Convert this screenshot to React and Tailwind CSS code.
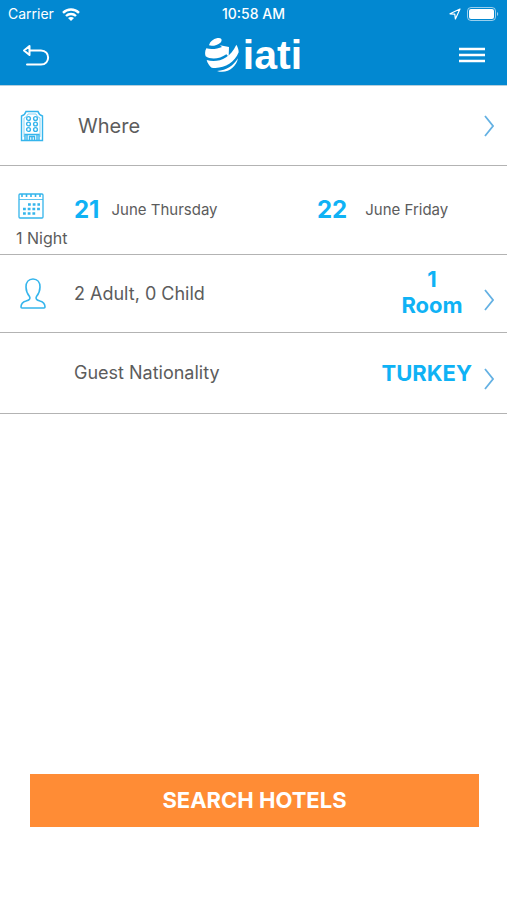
/**
 * HotelSearch: mobile hotel search form with destination, dates, guests
 * and nationality rows.
 */

function StatusBar() {
  return (
    <div className="grid h-7 grid-cols-3 items-center px-2 text-sm">
      <div className="flex items-center gap-2">
        <span>Carrier</span>
        <svg viewBox="0 0 18 13" className="h-[13px] w-[18px]" fill="none" stroke="currentColor" strokeWidth="2.4">
          <path d="M1 4.8C5.5.4 12.5.4 17 4.8" />
          <path d="M4 8C6.8 5.3 11.2 5.3 14 8" />
          <path d="M9 13 6 10.1C7.8 8.6 10.2 8.6 12 10.1Z" fill="currentColor" stroke="none" />
        </svg>
      </div>
      <span className="text-center font-medium">10:58 AM</span>
      <div className="flex items-center justify-end gap-1.5">
        <svg viewBox="0 0 12 12" className="size-3" fill="none" stroke="currentColor" strokeWidth="1.2" strokeLinejoin="round">
          <path d="M11 1 1 5.8 5.8 6.2 6.4 11Z" />
        </svg>
        <svg viewBox="0 0 32 14" className="h-3.5 w-8" fill="none">
          <rect x="0.5" y="0.5" width="28" height="13" rx="3.5" stroke="currentColor" opacity="0.6" />
          <rect x="2" y="2" width="25" height="10" rx="2" fill="currentColor" />
          <path d="M30 5v4c1.6-.6 1.6-3.4 0-4Z" fill="currentColor" opacity="0.6" />
        </svg>
      </div>
    </div>
  );
}

function Logo() {
  return (
    <div className="flex items-center gap-1">
      <svg viewBox="0 0 102 106" className="h-9 w-[34px]" fill="currentColor">
        <path d="M12 24C15 10 30 2 42 2C51 3 52 10 46 16C38 23 22 28 12 24Z" />
        <path d="M4 33C20 38 38 34 51 29L45 24L72 29L71 58L64 51C44 66 16 67 2 57C-1 48 0 40 4 33Z" />
        <path d="M5 68C36 77 74 66 94 22C99 30 101 38 101 45C88 78 54 96 20 91C13 86 7 77 5 68Z" />
        <path d="M36 101C66 99 86 84 99 63C94 90 66 111 36 101Z" />
      </svg>
      <span className="font-['Liberation_Sans',sans-serif] text-[41px] leading-10 font-bold">iati</span>
    </div>
  );
}

function BuildingIcon() {
  return (
    <svg viewBox="0 0 24 32" className="h-8 w-6" fill="none" stroke="currentColor" strokeWidth="1.4">
      <path d="M1.5 30.5V6Q5 5 6 1.5H18Q19 5 22.5 6V30.5Z" />
      <path d="M4 27V8Q7 7 8 4H16Q17 7 20 8V27" strokeWidth="0.6" />
      <circle cx="8.5" cy="8.5" r="1.9" />
      <circle cx="15.5" cy="8.5" r="1.9" />
      <circle cx="8.5" cy="14" r="1.9" />
      <circle cx="15.5" cy="14" r="1.9" />
      <circle cx="8.5" cy="19.5" r="1.9" />
      <circle cx="15.5" cy="19.5" r="1.9" />
      <path d="M5 30V24.5H19V30M7 24.5V30M17 24.5V30M9.5 30V26.5H14.5V30M12 26.5V30" />
    </svg>
  );
}

function CalendarIcon() {
  return (
    <svg viewBox="0 0 26 26" className="size-[26px]" fill="none" stroke="currentColor">
      <rect x="1" y="1" width="24" height="24" rx="1" strokeWidth="1.3" />
      <path d="M1 6.5H25" strokeWidth="0.8" />
      <path d="M4 1v3M8.5 1v3M13 1v3M17.5 1v3M22 1v3" strokeWidth="1.6" />
      <path d="M10 11.5H22M5 16H22M5 20.5H18" strokeWidth="2.6" strokeDasharray="2.8 1.9" />
    </svg>
  );
}

function GuestIcon() {
  return (
    <svg viewBox="0 0 26 31" className="h-[31px] w-[26px]" fill="none" stroke="currentColor" strokeWidth="1.6" strokeLinejoin="round">
      <path d="M13 1C8.5 1 6 4.5 6 9C6 13 7.5 16 9.5 18.5C11 21 9 22 6 23C2.5 24 1 25.500 1 29Q1 30 2 30H24Q25 30 25 29C25 25.500 23.500 24 20 23C17 22 15 21 16.500 18.500C18.500 16 20 13 20 9C20 4.500 17.500 1 13 1Z" />
    </svg>
  );
}

function Chevron() {
  return (
    <svg viewBox="0 0 10 22" className="h-[22px] w-2.5 shrink-0 text-[#64b1e3]" fill="none" stroke="currentColor" strokeWidth="1.8">
      <path d="M1 1 9 11 1 21" />
    </svg>
  );
}

export default function App() {
  return (
    <div className="flex min-h-screen flex-col bg-white font-[Inter,sans-serif] text-[#5c5c5c]">
      <header className="border-b border-[#b5cfdd] bg-[#0288d1] text-white">
        <StatusBar />
        <nav className="grid h-[57px] grid-cols-3 items-center px-[22px] pb-[3px]">
          <button type="button" aria-label="Back" className="justify-self-start">
            <svg viewBox="0 0 28 24" className="h-6 w-7" fill="none" stroke="currentColor" strokeWidth="2" strokeLinecap="round" strokeLinejoin="round">
              <path d="M8 7.5H19C28.5 7.5 28.5 21.5 19 21.5H5" />
              <path d="M7.5 3 2 7.5 7.5 12Z" />
            </svg>
          </button>
          <div className="justify-self-center">
            <Logo />
          </div>
          <button type="button" aria-label="Menu" className="justify-self-end">
            <svg viewBox="0 0 26 16" className="h-4 w-[26px]" stroke="currentColor" strokeWidth="2.4">
              <path d="M0 2H26M0 8H26M0 14H26" />
            </svg>
          </button>
        </nav>
      </header>

      <main className="flex flex-1 flex-col">
        <button type="button" className="flex h-20 items-center border-b border-[#b3b3b3] pr-[13px] pl-5 text-left">
          <span className="w-[58px] text-[#35b5ec]"><BuildingIcon /></span>
          <span className="flex-1 text-xl">Where</span>
          <Chevron />
        </button>

        <section className="flex h-[89px] flex-col justify-end border-b border-[#b3b3b3] pb-1">
          <div className="flex items-center pl-[18px]">
            <span className="w-14 text-[#35b5ec]"><CalendarIcon /></span>
            <div className="grid flex-1 grid-cols-[243fr_190fr] pt-2">
              <button type="button" className="flex items-center gap-3">
                <span className="text-2xl font-bold text-[#0fb2f5]">21</span>
                <span className="text-[15px]">June Thursday</span>
              </button>
              <button type="button" className="flex items-center gap-[18px]">
                <span className="text-2xl font-bold text-[#0fb2f5]">22</span>
                <span className="text-[15px]">June Friday</span>
              </button>
            </div>
          </div>
          <span className="pl-4 text-base">1 Night</span>
        </section>

        <button type="button" className="flex h-[78px] items-center border-b border-[#b3b3b3] pr-[13px] pl-5 text-left">
          <span className="w-[54px] text-[#35b5ec]"><GuestIcon /></span>
          <span className="flex-1 text-lg">2 Adult, 0 Child</span>
          <span className="flex w-20 flex-col pb-1 text-center text-[22px] leading-[26px] font-bold text-[#0fb2f5]">
            <span>1</span>
            <span>Room</span>
          </span>
          <span className="pt-3 pl-3"><Chevron /></span>
        </button>

        <button type="button" className="flex h-[81px] items-center border-b border-[#b3b3b3] pr-[13px] pl-[74px] text-left">
          <span className="flex-1 text-lg">Guest Nationality</span>
          <span className="text-[22px] leading-[26px] font-bold text-[#0fb2f5]">TURKEY</span>
          <span className="pt-3 pl-3"><Chevron /></span>
        </button>

        <div className="mt-auto pr-7 pb-[73px] pl-[30px]">
          <button type="button" className="h-[53px] w-full bg-[#ff8c35] text-[22px] font-bold text-white">
            SEARCH HOTELS
          </button>
        </div>
      </main>
    </div>
  );
}
